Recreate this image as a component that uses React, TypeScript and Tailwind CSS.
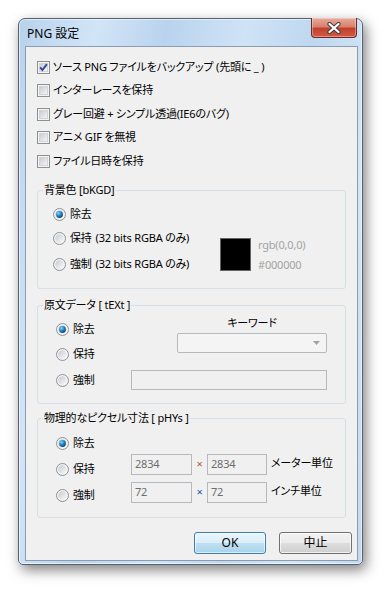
import { useId } from "react";

const font = "font-['Noto_Sans','Noto_Sans_CJK_JP',sans-serif] [font-feature-settings:'palt']";

function CheckBox({ checked }: { checked?: boolean }) {
  const id = useId();
  return (
    <svg width="13" height="13" viewBox="0 0 13 13" className="shrink-0">
      <defs>
        <linearGradient id={id} x1="0" y1="0" x2="1" y2="1">
          <stop offset="0" stopColor="#c6cbd1" />
          <stop offset="1" stopColor="#f6f6f6" />
        </linearGradient>
      </defs>
      <rect x="0.5" y="0.5" width="12" height="12" fill="#f4f4f4" stroke="#8e8f8f" />
      <rect x="2.5" y="2.5" width="8" height="8" fill={`url(#${id})`} stroke="#d2d4d7" />
      {checked && (
        <path d="M3.2 6.4 L5.4 9 L9.9 3.1" fill="none" stroke="#30469a" strokeWidth="1.9" />
      )}
    </svg>
  );
}

function Radio({ checked }: { checked?: boolean }) {
  const id = useId();
  return (
    <svg width="13" height="13" viewBox="0 0 13 13" className="shrink-0">
      <defs>
        <linearGradient id={`${id}a`} x1="0" y1="0" x2="1" y2="1">
          <stop offset="0" stopColor="#c5cad0" />
          <stop offset="1" stopColor="#fafafa" />
        </linearGradient>
        <radialGradient id={`${id}b`} cx="0.35" cy="0.3" r="0.75">
          <stop offset="0" stopColor="#8fd6fb" />
          <stop offset="0.45" stopColor="#2b8fcf" />
          <stop offset="1" stopColor="#0b3f66" />
        </radialGradient>
      </defs>
      <circle cx="6.5" cy="6.5" r="6" fill="#f3f3f3" stroke="#8e9194" />
      <circle cx="6.5" cy="6.5" r="4.3" fill={`url(#${id}a)`} />
      {checked && <circle cx="6.5" cy="6.5" r="3.4" fill={`url(#${id}b)`} />}
    </svg>
  );
}

function CheckRow({ label, checked }: { label: string; checked?: boolean }) {
  return (
    <div className="flex h-5 items-center gap-[3px]">
      <CheckBox checked={checked} />
      <span className="whitespace-nowrap">{label}</span>
    </div>
  );
}

function RadioRow({ label, checked, note }: { label: string; checked?: boolean; note?: string }) {
  return (
    <div className="flex h-5 items-center gap-[4px] whitespace-nowrap">
      <Radio checked={checked} />
      <span>{label}</span>
      {note && <span>{note}</span>}
    </div>
  );
}

function Group({ title, className, children }: { title: string; className: string; children: React.ReactNode }) {
  return (
    <div className={`relative rounded-[3px] border border-[#d5dfe5] ${className}`}>
      <span className="absolute left-[5px] top-[-11px] bg-[#f0f0f0] px-[1px] leading-5 whitespace-nowrap">{title}</span>
      {children}
    </div>
  );
}

function Field({ value, w }: { value?: string; w: string }) {
  return (
    <div className={`flex h-[21px] items-center border border-[#b5b9bd] bg-[#f0f0f0] pl-[3px] text-[#6d6d6d] ${w}`}>
      {value}
    </div>
  );
}

export default function App() {
  return (
    <div className={`min-h-screen bg-white pl-[18px] pt-[18px] text-[12px] text-black ${font}`}>
      <div className="flex h-[547px] w-[345px] flex-col rounded-t-[7px] rounded-b-[5px] border border-[#56616d] bg-[linear-gradient(100deg,#b8d2ec_0%,#d2e5f7_18%,#b9d3ee_34%,#cfe3f6_52%,#bed7f0_68%,#d4e6f7_84%,#c1d9f1_100%)] shadow-[3px_5px_13px_rgba(0,0,0,0.5),inset_0_0_0_1px_rgba(255,255,255,0.55)]">
        {/* Title bar */}
        <div className="flex h-[27px] items-start justify-between pl-[8px] pr-[5px]">
          <span className="mt-[5px] text-[12px] leading-5">PNG 設定</span>
          <div className="-mt-[1px] flex h-[20px] w-[46px] items-center justify-center rounded-b-[4px] border border-t-0 border-[#6e2a22] bg-[linear-gradient(#e9a99c_0%,#d8826f_45%,#c2402c_55%,#d25a44_100%)] shadow-[inset_0_0_0_1px_rgba(255,255,255,0.35)]">
            <svg width="16" height="12" viewBox="0 0 16 12">
              <path d="M3.5 2 L12.5 10 M12.5 2 L3.5 10" stroke="#3d3d3d" strokeWidth="4.2" strokeLinecap="round" />
              <path d="M3.5 2 L12.5 10 M12.5 2 L3.5 10" stroke="#ffffff" strokeWidth="2.3" strokeLinecap="round" />
            </svg>
          </div>
        </div>

        {/* Client area */}
        <div className="ml-[6px] mr-[4px] mb-[3px] flex-1 border border-[#8a9cb0] bg-[#f0f0f0] px-[11px] pt-[10px] text-[11px] tracking-[-0.2px]">
          <div className="flex flex-col gap-[3.5px]">
            <CheckRow checked label="ソース PNG ファイルをバックアップ (先頭に _ )" />
            <CheckRow label="インターレースを保持" />
            <CheckRow label="グレー回避 + シンプル透過(IE6のバグ)" />
            <CheckRow label="アニメ GIF を無視" />
            <CheckRow label="ファイル日時を保持" />
          </div>

          <Group title="背景色 [bKGD]" className="mt-[19px] h-[99px]">
            <div className="flex">
              <div className="flex w-[182px] flex-col gap-[4px] pl-[15px] pt-[13px]">
                <RadioRow checked label="除去" />
                <RadioRow label="保持" note="(32 bits RGBA のみ)" />
                <div className="mt-[2px]">
                  <RadioRow label="強制" note="(32 bits RGBA のみ)" />
                </div>
              </div>
              <div className="mt-[47px] flex items-start">
                <div className="h-[33px] w-[31px] border border-[#646464] bg-black" />
                <div className="-mt-[3px] ml-[7px] flex flex-col text-[#a3a3a3]">
                  <span className="h-5 leading-5">rgb(0,0,0)</span>
                  <span className="h-5 leading-5">#000000</span>
                </div>
              </div>
            </div>
          </Group>

          <Group title="原文データ [ tEXt ]" className="mt-[16px] h-[99px]">
            <div className="flex pl-[18px] pr-[18px]">
              <div className="flex w-[75px] flex-col gap-[5.5px] pt-[13px]">
                <RadioRow checked label="除去" />
                <RadioRow label="保持" />
                <RadioRow label="強制" />
              </div>
              <div className="flex flex-1 flex-col items-end pt-[7px]">
                <div className="flex w-[150px] flex-col items-center">
                  <span className="h-5 leading-5">キーワード</span>
                  <div className="flex h-[20px] w-full rounded-[2px] border border-[#b5b9bd] bg-[#f4f4f4]">
                    <div className="flex-1" />
                    <div className="flex w-[19px] items-center justify-center">
                      <svg width="7" height="4" viewBox="0 0 7 4">
                        <path d="M0 0 H7 L3.5 4 Z" fill="#a2a2a2" />
                      </svg>
                    </div>
                  </div>
                </div>
                <div className="mt-[17px] h-[20px] w-full border border-[#b5b9bd] bg-[#f0f0f0]" />
              </div>
            </div>
          </Group>

          <Group title="物理的なピクセル寸法 [ pHYs ]" className="mt-[14px] h-[100px]">
            <div className="flex pl-[18px]">
              <div className="flex w-[75px] flex-col gap-[6px] pt-[14px]">
                <RadioRow checked label="除去" />
                <RadioRow label="保持" />
                <RadioRow label="強制" />
              </div>
              <div className="flex flex-col gap-[7px] pt-[35px]">
                <div className="flex items-center">
                  <Field w="w-[61px]" value="2834" />
                  <span className="w-[15px] text-center text-[#b0581c]">×</span>
                  <Field w="w-[60px]" value="2834" />
                  <span className="ml-[4px] -mt-[3px]">メーター単位</span>
                </div>
                <div className="flex items-center">
                  <Field w="w-[61px]" value="72" />
                  <span className="w-[15px] text-center text-[#2456a3]">×</span>
                  <Field w="w-[60px]" value="72" />
                  <span className="ml-[4px] -mt-[3px]">インチ単位</span>
                </div>
              </div>
            </div>
          </Group>

          <div className="-mr-[6px] mt-[14px] flex justify-end gap-[13px] text-[12px] tracking-normal">
            <button className="flex h-[22px] w-[72px] items-center justify-center rounded-[3px] border border-[#3c7fb1] bg-[linear-gradient(#eaf6fd_0%,#d9eef9_50%,#bfe0f1_51%,#a9d3ea_100%)] shadow-[inset_0_0_0_1px_rgba(255,255,255,0.6)]">
              OK
            </button>
            <button className="flex h-[22px] w-[73px] items-center justify-center rounded-[3px] border border-[#707070] bg-[linear-gradient(#f2f2f2_0%,#ebebeb_50%,#dddddd_51%,#cfcfcf_100%)] shadow-[inset_0_0_0_1px_rgba(255,255,255,0.7)]">
              中止
            </button>
          </div>
        </div>
      </div>
    </div>
  );
}
